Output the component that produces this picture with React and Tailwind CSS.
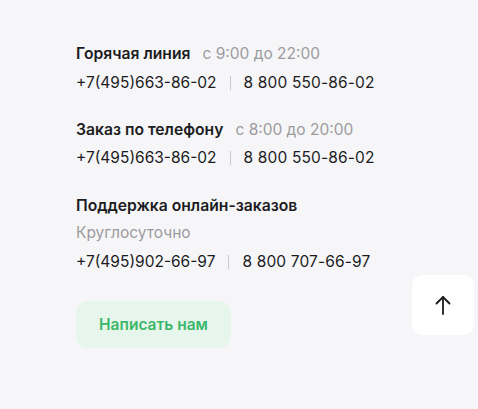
export default function App() {
  const Phones = ({ a, b }) => (
    <div className="flex items-center text-[15.5px] leading-[20px] text-[#1c1c1e]">
      <span>{a}</span>
      <span className="mx-[13px] h-[14px] w-px bg-[#c9c9cc]" />
      <span className="tracking-[0.15px]">{b}</span>
    </div>
  );
  return (
    <div className="relative w-[478px] h-[409px] bg-[#f6f6f8] overflow-hidden" style={{ fontFamily: "Inter, 'Noto Sans', sans-serif" }}>
      <div className="pl-[76px] pt-[44px] flex flex-col">
        <div className="flex items-baseline gap-[12px] leading-[20px]">
          <span className="text-[15.7px] font-semibold text-[#1c1c1e]">Горячая линия</span>
          <span className="text-[15.5px] text-[#9b9b9e]">с 9:00 до 22:00</span>
        </div>
        <div className="mt-[9px]"><Phones a="+7(495)663-86-02" b="8 800 550-86-02" /></div>
        <div className="mt-[27px] flex items-baseline gap-[12px] leading-[20px]">
          <span className="text-[15.7px] font-semibold text-[#1c1c1e]">Заказ по телефону</span>
          <span className="text-[15.5px] text-[#9b9b9e]">с 8:00 до 20:00</span>
        </div>
        <div className="mt-[8px]"><Phones a="+7(495)663-86-02" b="8 800 550-86-02" /></div>
        <div className="mt-[28px] text-[15.7px] font-semibold leading-[20px] text-[#1c1c1e]">Поддержка онлайн-заказов</div>
        <div className="mt-[7px] text-[15.5px] leading-[20px] text-[#9b9b9e]">Круглосуточно</div>
        <div className="mt-[9px]"><Phones a="+7(495)902-66-97" b="8 800 707-66-97" /></div>
        <button className="mt-[29px] w-[155px] h-[47px] rounded-[12px] bg-[#e6f6ec] text-[15.5px] font-semibold text-[#3bb66a]">Написать нам</button>
      </div>
      <div className="absolute left-[412px] top-[275px] w-[62px] h-[60px] rounded-[10px] bg-white flex items-center justify-center">
        <svg width="20" height="22" viewBox="0 0 20 22" fill="none" stroke="#1c1c1e" strokeWidth="1.8" strokeLinecap="round" strokeLinejoin="round">
          <path d="M10 20V3" />
          <path d="M3.5 9.5L10 3l6.5 6.5" />
        </svg>
      </div>
    </div>
  );
}
